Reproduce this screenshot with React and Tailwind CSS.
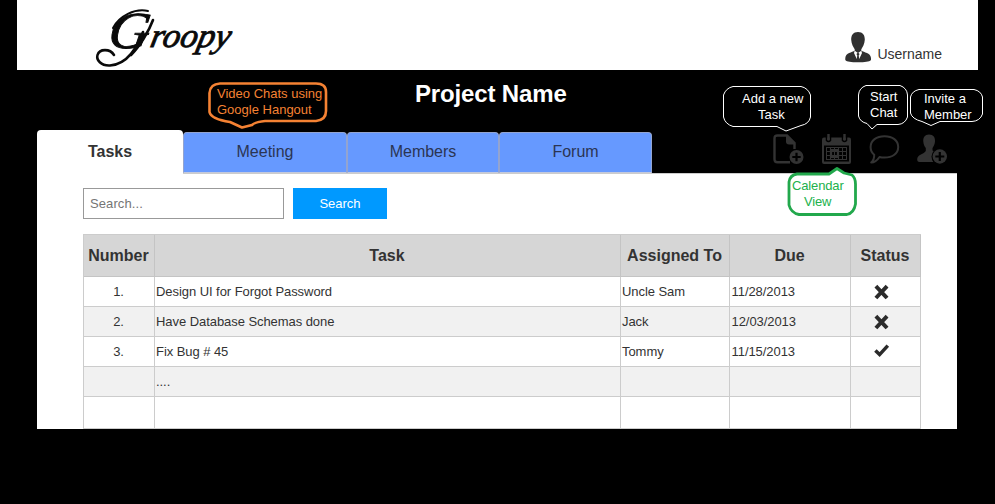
import React from "react";

const TASKS = [
  { number: "1.", task: "Design UI for Forgot Password", who: "Uncle Sam", due: "11/28/2013", status: "open" },
  { number: "2.", task: "Have Database Schemas done", who: "Jack", due: "12/03/2013", status: "open" },
  { number: "3.", task: "Fix Bug # 45", who: "Tommy", due: "11/15/2013", status: "done" },
  { number: "", task: "....", who: "", due: "", status: "" },
  { number: "", task: "", who: "", due: "", status: "" },
];

function Logo() {
  return (
    <svg className="block overflow-visible" width="146" height="70" viewBox="92 0 146 70" aria-label="Groopy">
      <g fill="#0a0a0a" stroke="#0a0a0a" strokeWidth="0.9" fontFamily="'Liberation Serif', serif" fontStyle="italic">
        <text transform="translate(107 48) skewX(-8)" fontSize="52" textLength="41" lengthAdjust="spacingAndGlyphs">G</text>
        <text transform="translate(149 47) skewX(-12)" fontSize="34" textLength="80" lengthAdjust="spacingAndGlyphs">roopy</text>
      </g>
      <g fill="none" stroke="#0a0a0a" strokeLinecap="round">
        <path d="M143 32C137 47 128 64 110 65.500C101 66 96 60 97.500 55C99.500 48.500 110 48.500 114 55" strokeWidth="2.600" />
        <path d="M153 20C149 31 140 46 131 55" strokeWidth="2.600" />
        <path d="M148 11C135 8 119 16 113 28" strokeWidth="2" />
      </g>
    </svg>
  );
}

function UserIcon() {
  return (
    <svg className="block" width="27" height="31" viewBox="0 0 27 31">
      <path d="M13 0C17.800 0 20 3.300 19.800 7.800C19.600 12 17.500 15.500 16.300 17.200V18.800C19 20.500 25.500 20.800 26 26V28C24 30 20 30.200 13 30.200S2 30 .3 28V26C.8 20.800 7 20.500 9.700 18.800V17.200C8.500 15.500 6.400 12 6.200 7.800C6 3.300 8.200 0 13 0Z" fill="#303030" />
      <path d="M9.700 18.700L13 21L16.300 18.700L17 21L14.200 27H11.800L9 21Z" fill="#fff" />
      <path d="M13 20.500L14.600 22L13.700 23.600L14.600 28.500L13 30L11.400 28.500L12.300 23.600L11.400 22Z" fill="#303030" />
    </svg>
  );
}

function AddTaskIcon() {
  return (
    <svg className="block" width="31" height="31" viewBox="0 0 31 31">
      <path d="M17 28.200H4.500Q1.500 28.200 1.500 25.200V4.500Q1.500 1.500 4.500 1.500H14L21.500 9V15" fill="none" stroke="#333" strokeWidth="2.400" />
      <path d="M13 1L22.500 10V10.500H16Q13 10.500 13 7.500Z" fill="#333" />
      <circle cx="23.500" cy="23" r="7" fill="#333" />
      <path d="M23.500 18.800V27.200M19.300 23H27.700" stroke="#000" strokeWidth="2.200" />
    </svg>
  );
}

function CalendarIcon() {
  return (
    <svg className="block" width="31" height="31" viewBox="0 0 31 31">
      <path d="M3 3.500H28Q30 3.500 30 5.500V28Q30 30 28 30H3Q1 30 1 28V5.500Q1 3.500 3 3.500Z" fill="#333" />
      <path d="M3 11.500H28V27.500H3Z" fill="#000" />
      <path d="M5.500 3V6.500Q7.500 8.500 9.500 6.500V3M21.500 3V6.500Q23.500 8.500 25.500 6.500V3" fill="none" stroke="#000" strokeWidth="1.500" />
      <path d="M7.500 0V6M23.500 0V6" stroke="#333" strokeWidth="2.400" />
      <path d="M5 13.500H26M5 17.500H26M5 21.500H26M5 25.500H26M5.500 13.500V25.500M9.500 13.500V25.500M13.500 13.500V25.500M17.500 13.500V25.500M21.500 13.500V25.500M25.500 13.500V25.500" stroke="#333" strokeWidth="1" />
      <path d="M10 16H17V23H10Z" fill="none" stroke="#333" strokeWidth="2.200" />
    </svg>
  );
}

function ChatIcon() {
  return (
    <svg className="block" width="31" height="31" viewBox="0 0 31 31">
      <path d="M15.500 2.200C23.500 2.200 29.200 6.500 29.200 13C29.200 19.500 23.500 23.600 15.500 23.600C13.500 23.600 12 23.400 10.500 23C8.500 26 5.500 28.600 2.200 28.600C4.500 26.500 5.300 23.500 5.200 20.700C2.700 18.800 1.600 16.300 1.600 13C1.600 6.500 7.500 2.200 15.500 2.200Z" fill="none" stroke="#333" strokeWidth="2" strokeLinejoin="round" />
    </svg>
  );
}

function InviteIcon() {
  return (
    <svg className="block" width="31" height="31" viewBox="0 0 31 31">
      <path d="M12 .5C16.500 .5 18.300 3.500 18 7.500C17.800 10.500 16.500 12.500 15.500 14V16.500L18 18.200C15 21 14.500 25 16.500 28H2.500Q0 28 .2 25C.5 20.500 7 20 8.800 17V14C7.500 12.500 6.500 10.500 6.300 7.500C6 3.500 7.800 .5 12 .5Z" fill="#333" />
      <circle cx="22.800" cy="22.500" r="8.300" fill="#000" />
      <circle cx="22.800" cy="22.500" r="7.200" fill="#333" />
      <path d="M22.800 18V27M18.300 22.500H27.300" stroke="#000" strokeWidth="2.200" />
    </svg>
  );
}

function StatusMark({ status }) {
  if (!status) return null;
  return (
    <svg className="mx-auto block" width="24" height="16" viewBox="0 0 24 16">
      {status === "open" ? (
        <path d="M2.500 2.800L12.500 13.400M12.500 2.800L2.500 13.400" stroke="#2b2b2b" strokeWidth="4.600" strokeLinecap="square" transform="translate(1.100 1.200) scale(0.850)" />
      ) : (
        <path d="M1.400 6.500L5.600 10.600L13.800 1.600" fill="none" stroke="#2b2b2b" strokeWidth="3.500" />
      )}
    </svg>
  );
}

function Tab({ className, children }) {
  return (
    <button type="button" className={`h-[41px] rounded-t-[4px] border border-b-[#c3c9dc] border-[#93a4d0] bg-[#6699ff] pb-px text-base text-[#2b3553] ${className}`}>
      {children}
    </button>
  );
}

function Callout({ className, path, stroke, strokeWidth, fill = "none", children }) {
  return (
    <div className={`absolute text-[13px] leading-4 whitespace-pre ${className}`}>
      <svg className="absolute inset-0 overflow-visible" width="100%" height="100%">
        <path d={path} fill={fill} stroke={stroke} strokeWidth={strokeWidth} strokeLinejoin="round" />
      </svg>
      <div className="relative">{children}</div>
    </div>
  );
}

export default function App() {
  return (
    <div className="relative flex h-[504px] w-[995px] flex-col overflow-hidden bg-black font-['Liberation_Sans',Arial,sans-serif] text-[#333]">
      <header className="ml-[17px] flex h-[70px] w-[961px] shrink-0 justify-between bg-white">
        <div className="pl-[75px]">
          <Logo />
        </div>
        <div className="flex items-start pt-8 pr-9">
          <UserIcon />
          <span className="ml-[5px] pt-[12px] text-sm leading-5">Username</span>
        </div>
      </header>

      <h1 className="h-[60px] shrink-0 pt-[8px] pl-[415px] text-2xl leading-8 font-bold tracking-[-0.15px] text-white">Project Name</h1>

      <nav className="ml-[37px] flex h-[43px] w-[920px] shrink-0 justify-between">
        <div className="flex items-end">
          <button type="button" className="h-[43px] w-[146px] rounded-t-[4px] bg-white text-base font-bold">Tasks</button>
          <Tab className="w-[164px]">Meeting</Tab>
          <Tab className="w-[152px]">Members</Tab>
          <Tab className="w-[153px]">Forum</Tab>
        </div>
        <div className="flex gap-[17px] pt-1 pr-[9px]">
          <AddTaskIcon />
          <CalendarIcon />
          <ChatIcon />
          <InviteIcon />
        </div>
      </nav>

      <main className="ml-[37px] h-[256px] w-[920px] shrink-0 bg-white pl-[46px]">
        <div className="ml-[100px] h-px bg-[#ccc]" />
        <form className="flex gap-[9px] pt-[14px]">
          <input className="h-[31px] w-[201px] border border-[#999] px-1.5 text-[13px] tracking-[0.1px] placeholder:text-[#757575] placeholder:opacity-100" placeholder="Search..." />
          <button type="button" className="h-[31px] w-[94px] bg-[#0099ff] text-[13px] text-white">Search</button>
        </form>
        <table className="mt-[15px] w-[838px] table-fixed border-separate border-spacing-0 border-t border-l border-[#ccc] text-[13px]">
          <colgroup>
            <col className="w-[71px]" />
            <col className="w-[466px]" />
            <col className="w-[109px]" />
            <col className="w-[121px]" />
            <col className="w-[70px]" />
          </colgroup>
          <thead>
            <tr className="h-[42px] bg-[#d6d6d6] text-base">
              {["Number", "Task", "Assigned To", "Due", "Status"].map((label) => (
                <th key={label} className="border-r border-b border-[#c4c4c4] p-0 pr-px whitespace-nowrap">{label}</th>
              ))}
            </tr>
          </thead>
          <tbody className="tracking-[-0.06px]">
            {TASKS.map((row, i) => (
              <tr key={i} className="h-[30px] even:bg-[#f1f1f1] last:h-8">
                <td className="border-r border-b border-[#ccc] p-0 pr-px text-center">{row.number}</td>
                <td className="border-r border-b border-[#ccc] p-0 pl-px">{row.task}</td>
                <td className="border-r border-b border-[#ccc] p-0 pl-px">{row.who}</td>
                <td className="border-r border-b border-[#ccc] p-0 pl-[1.5px]">{row.due}</td>
                <td className="border-r border-b border-[#ccc] p-0"><StatusMark status={row.status} /></td>
              </tr>
            ))}
          </tbody>
        </table>
      </main>

      <Callout className="top-[82px] left-[208px] h-[46px] w-[120px] pt-1 pl-[9px] text-[#f58233]" stroke="#f58233" strokeWidth="2.600" path="M12 1.500H108Q118 1.500 118 10V29Q118 38 108 39H57Q47 40 44 43L34 45.500L22 40Q3 37 1.500 30V11Q2 2 12 1.500Z">
        {"Video Chats using\nGoogle Hangout"}
      </Callout>
      <Callout className="top-[86px] left-[723px] h-[46px] w-[88px] pt-[5px] pl-[19px] text-white" stroke="#fff" strokeWidth="1" path="M10 .5H78Q85 2 87.500 9V31Q86 38 78 39.500L63 45L54 40.500H10Q2 38 .5 31V9Q3 2 10 .5Z">
        <span className="block">Add a new</span>
        <span className="block pl-4">Task</span>
      </Callout>
      <Callout className="top-[85px] left-[858px] h-[45px] w-[50px] pt-1 pl-3 text-white" stroke="#fff" strokeWidth="1" path="M8 .5H42Q49 3 49.500 10V32Q47 39 40 39.500H19L14 44L9 38.500Q2 37 .5 31V10Q1 3 8 .5Z">
        {"Start\nChat"}
      </Callout>
      <Callout className="top-[89px] left-[910px] h-[38px] w-[73px] pt-[2px] pl-[14px] text-white" stroke="#fff" strokeWidth="1" path="M9 .5H64Q71 2 72.500 8V25Q70 32 62 32.500H30L21 36.500L12 32.500Q2 30 .5 24V8Q2 2 9 .5Z">
        {"Invite a\nMember"}
      </Callout>
      <Callout className="top-[167px] left-[787px] h-[50px] w-[70px] pt-[11px] pl-[5px] tracking-[-0.15px] text-[#22b14c]" stroke="#22a84c" strokeWidth="2.800" fill="#fff" path="M10 7H42L50 1.500L57 6L65 8Q68.500 11 68.500 17V37Q67 46 60 47.500H12Q4 46 2 38V15Q3 8 10 7Z">
        <span className="block">Calendar</span>
        <span className="block pl-3">View</span>
      </Callout>
    </div>
  );
}
